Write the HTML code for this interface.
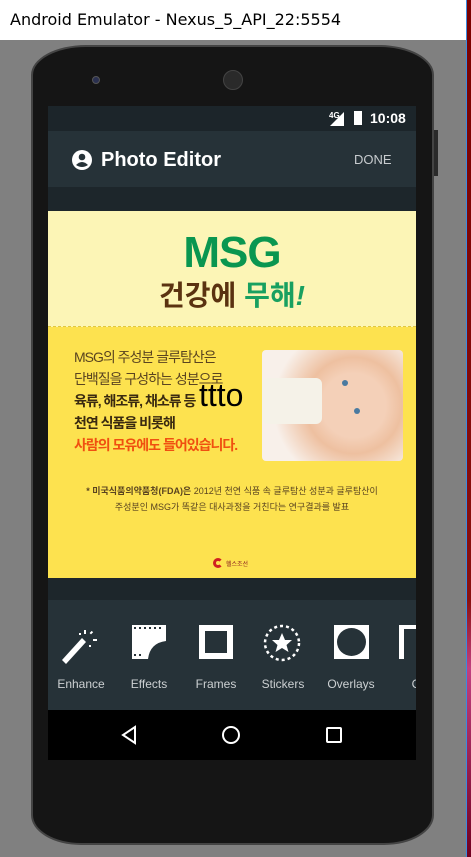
<!DOCTYPE html>
<html><head><meta charset="utf-8"><style>
*{margin:0;padding:0;box-sizing:border-box}
body{width:471px;height:857px;overflow:hidden;background:#808080;position:relative;font-family:"Liberation Sans","Noto Sans CJK KR",sans-serif}
.abs{position:absolute}
.title{left:0;top:0;width:466px;height:40px;background:#fff;font-family:"DejaVu Sans","Liberation Sans",sans-serif;font-size:16px;line-height:40px;padding-left:10px;color:#000}
.edge{left:466px;top:0;width:1px;height:857px;background:#3b8be0}
.red{left:467px;top:0;width:4px;height:857px;background:linear-gradient(#7a0000,#8a1010 70%,#c04080 78%,#700020)}
.phone{left:31px;top:45px;width:403px;height:800px;background:#151515;border-radius:55px 55px 50px 50px/30px 30px 30px 30px;border:2px solid #444}
.screen{left:48px;top:106px;width:368px;height:654px;background:#1d262b;overflow:hidden}
.lbl{color:#ccd0d2;font-size:12px;position:absolute;top:571px;text-align:center;width:70px}
</style></head><body>
<div class="abs title">Android Emulator - Nexus_5_API_22:5554</div>
<div class="abs edge"></div><div class="abs red"></div>
<div class="abs" style="left:434px;top:130px;width:4px;height:46px;background:#2a2a2a"></div>
<div class="abs phone"></div>
<div class="abs" style="left:92px;top:76px;width:8px;height:8px;border-radius:50%;background:#2a3050;border:1px solid #555"></div>
<div class="abs" style="left:223px;top:70px;width:20px;height:20px;border-radius:50%;background:#2a2a2a;border:1px solid #444"></div>
<div class="abs screen">
 <div class="abs" style="left:0;top:0;width:368px;height:25px;background:#1c252a"></div>
 <div class="abs" style="left:281px;top:5px;color:#fff;font-size:8px;font-weight:bold">4G</div>
 <svg class="abs" style="left:282px;top:6px" width="14" height="14"><polygon points="14,0 14,14 0,14" fill="#fff"/></svg>
 <div class="abs" style="left:306px;top:5px;width:8px;height:14px;background:#fff"></div>
 <div class="abs" style="left:322px;top:4px;color:#fff;font-size:14px;font-weight:bold">10:08</div>
 <div class="abs" style="left:0;top:25px;width:368px;height:56px;background:#263238"></div>
 <svg class="abs" style="left:24px;top:44px" width="20" height="20"><circle cx="10" cy="10" r="10" fill="#fff"/><circle cx="10" cy="7" r="3.3" fill="#263238"/><path d="M4 15 Q10 9 16 15 Q10 19 4 15Z" fill="#263238"/></svg>
 <div class="abs" style="left:53px;top:43px;color:#fff;font-size:20px;font-weight:bold">Photo Editor</div>
 <div class="abs" style="left:306px;top:46px;color:#c8cccf;font-size:13px">DONE</div>
 <div class="abs" style="left:0;top:105px;width:368px;height:367px;background:#fde24f"></div>
 <div class="abs" style="left:0;top:105px;width:368px;height:116px;background:#fcf5b6;border-bottom:1px dashed #e0c840"></div>
 <div class="abs" style="left:0;top:122px;width:368px;text-align:center;color:#0a9650;font-size:44px;font-weight:bold;letter-spacing:-1px">MSG</div>
 <div class="abs" style="left:0;top:168px;width:368px;text-align:center;font-size:28px;font-weight:bold;color:#5a3210">건강에 <span style="color:#18a060">무해</span><i style="color:#18a060">!</i></div>
 <div class="abs" style="left:26px;top:240px;font-size:14px;line-height:22px;color:#5a4420;letter-spacing:-1px">MSG의 주성분 글루탐산은<br>단백질을 구성하는 성분으로<br><b style="color:#3a2a10">육류, 해조류, 채소류 등</b><br><b style="color:#3a2a10">천연 식품을 비롯해</b><br><b style="color:#f05010">사람의 모유에도 들어있습니다.</b></div>
 <div class="abs" style="left:214px;top:244px;width:141px;height:111px;border-radius:4px;background:radial-gradient(circle at 65% 50%,#f4d0b8 0 30%,#eec0a0 45%,#f8f0ea 75%);overflow:hidden">
  <div class="abs" style="left:0;top:28px;width:60px;height:46px;background:#f5f2e8;border-radius:6px"></div>
  <div class="abs" style="left:80px;top:30px;width:6px;height:6px;border-radius:50%;background:#4a7aa0"></div>
  <div class="abs" style="left:92px;top:58px;width:6px;height:6px;border-radius:50%;background:#4a7aa0"></div>
 </div>
 <div class="abs" style="left:151px;top:271px;font-size:32px;color:#000">ttto</div>
 <div class="abs" style="left:0;top:377px;width:368px;text-align:center;font-size:9px;line-height:16px;color:#5a4420"><b>* 미국식품의약품청(FDA)은</b> 2012년 천연 식품 속 글루탐산 성분과 글루탐산이<br>주성분인 MSG가 똑같은 대사과정을 거친다는 연구결과를 발표</div>
 <div class="abs" style="left:165px;top:452px;width:10px;height:10px;border-radius:50%;border:3px solid #d02020;border-right-color:transparent"></div>
 <div class="abs" style="left:178px;top:453px;font-size:6px;color:#8a2020">헬스조선</div>
 <div class="abs" style="left:0;top:494px;width:368px;height:110px;background:#263238"></div>
 <svg class="abs" style="left:12px;top:518px" width="40" height="40" fill="#fff"><path d="M2 36 L22 14 L26 18 L6 40Z"/><rect x="24" y="6" width="2" height="4"/><rect x="33" y="15" width="4" height="2"/><rect x="30" y="8" width="3" height="2" transform="rotate(-45 31 9)"/><rect x="19" y="9" width="2" height="2"/><rect x="29" y="21" width="2" height="2"/></svg>
 <svg class="abs" style="left:84px;top:519px" width="34" height="34" fill="#fff"><path d="M0 0 H34 V16 Q18 18 16 34 H0Z"/><g fill="#263238"><rect x="2" y="2" width="2" height="2"/><rect x="7" y="2" width="2" height="2"/><rect x="12" y="2" width="2" height="2"/><rect x="17" y="2" width="2" height="2"/><rect x="22" y="2" width="2" height="2"/><rect x="27" y="2" width="2" height="2"/><rect x="2" y="29" width="2" height="2"/><rect x="7" y="29" width="2" height="2"/></g></svg>
 <div class="abs" style="left:151px;top:519px;width:34px;height:34px;border:6px solid #fff"></div>
 <svg class="abs" style="left:215px;top:518px" width="38" height="38"><circle cx="19" cy="19" r="17" fill="none" stroke="#fff" stroke-width="2.5" stroke-dasharray="3 3"/><polygon points="19,9 22,16 29,16 23.5,21 25.5,28 19,24 12.5,28 14.5,21 9,16 16,16" fill="#fff"/></svg>
 <div class="abs" style="left:286px;top:519px;width:35px;height:34px;background:#fff"><div style="margin:3px;width:29px;height:28px;border-radius:50%;background:#263238"></div></div>
 <div class="abs" style="left:351px;top:519px;width:20px;height:34px;border-left:5px solid #fff;border-top:4px solid #fff"></div>
 <div class="lbl" style="left:-2px">Enhance</div>
 <div class="lbl" style="left:66px">Effects</div>
 <div class="lbl" style="left:133px">Frames</div>
 <div class="lbl" style="left:200px">Stickers</div>
 <div class="lbl" style="left:268px">Overlays</div>
 <div class="lbl" style="left:335px">Cr</div>
 <div class="abs" style="left:0;top:604px;width:368px;height:50px;background:#000"></div>
 <svg class="abs" style="left:72px;top:619px" width="20" height="20"><polygon points="15,2 15,18 3,10" fill="none" stroke="#fff" stroke-width="2"/></svg>
 <svg class="abs" style="left:173px;top:619px" width="20" height="20"><circle cx="10" cy="10" r="8" fill="none" stroke="#fff" stroke-width="2"/></svg>
 <div class="abs" style="left:278px;top:621px;width:16px;height:16px;border:2px solid #fff;border-radius:2px"></div>
</div>
</body></html>
